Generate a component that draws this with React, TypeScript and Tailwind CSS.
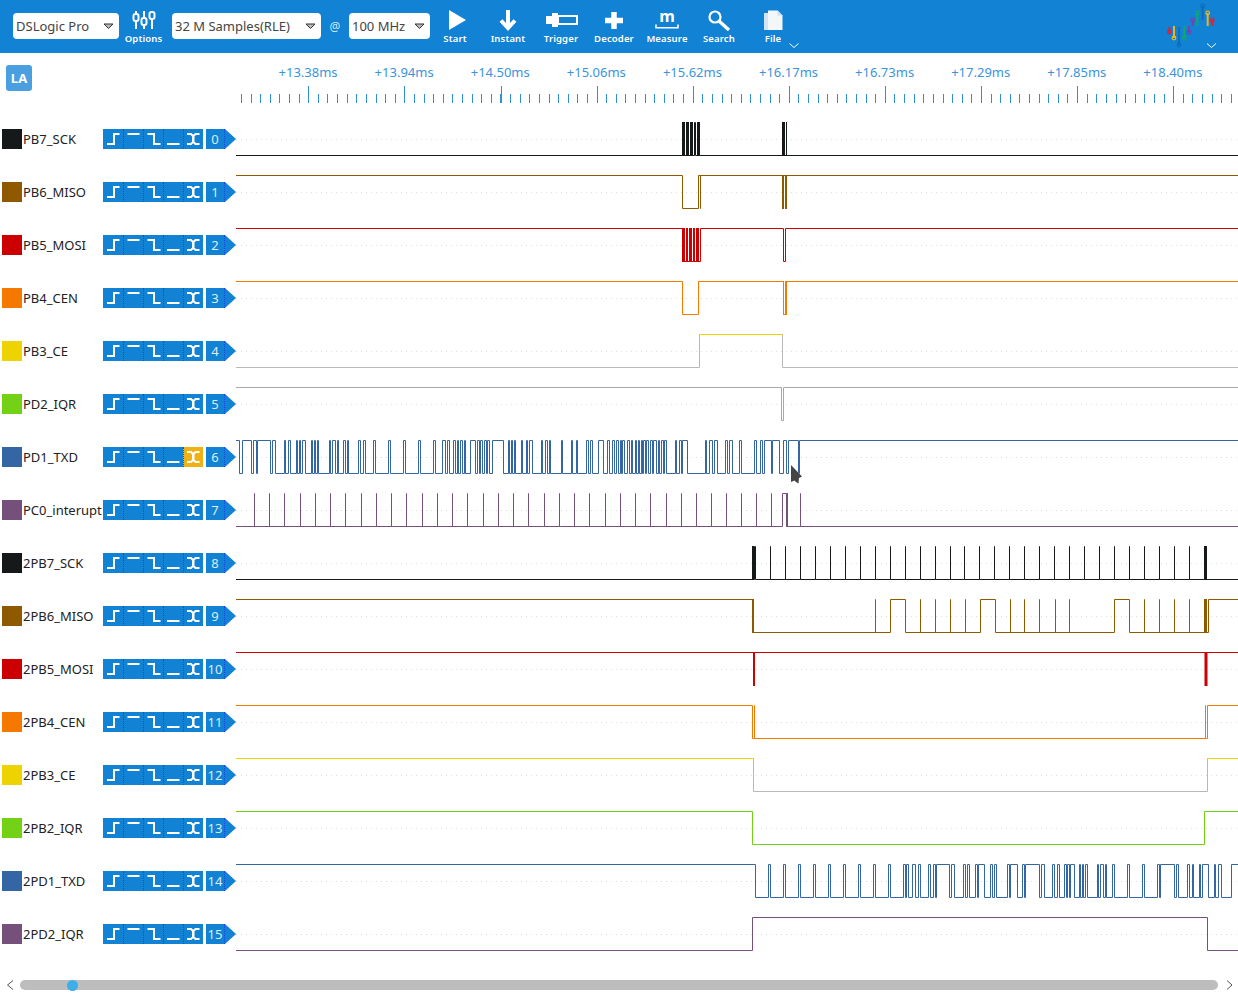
import React from "react";

type Iv = [number, number];
const z = (o: number, l: number[][]): Iv[] => l.map(([a, b]) => [o + a / 3, o + b / 3] as Iv);
const END = 1300;

const txd: Iv[] = [
  ...z(236, [[-30, 10], [20, 46], [52, 60], [65, 104], [110, 118], [144, 149], [157, 163], [181, 185], [189, 193], [199, 208], [226, 230], [235, 239], [244, 248], [280, 284], [289, 298], [303, 307], [322, 327], [334, 338], [367, 373], [382, 388], [412, 418], [457, 463], [502, 508], [547, 553], [592, 598], [619, 628], [634, 640], [652, 658], [664, 668], [673, 678], [684, 689], [703, 718], [724, 729], [734, 739], [745, 750], [754, 760], [769, 802], [817, 821], [826, 830], [835, 838]]),
  ...z(516, [[15, 20], [30, 35], [40, 48], [75, 80], [88, 93], [100, 104], [135, 140], [165, 170], [180, 185], [210, 216], [222, 228], [248, 262], [275, 280], [290, 294], [300, 306], [312, 316], [320, 325], [335, 340], [345, 350], [358, 362], [366, 371], [375, 379], [383, 388], [392, 396], [402, 408], [412, 420], [426, 430], [436, 442], [445, 450]]),
  ...z(670, [[16, 20], [28, 33], [38, 52], [105, 109], [118, 126], [133, 142], [165, 172], [178, 186], [208, 215], [252, 260], [270, 276], [282, 303], [308, 328], [340, 350], [355, 385]]),
  [799.5, END],
];

const txd2: Iv[] = [
  [200, 755],
  ...z(745, [[70, 75], [115, 120], [160, 165], [205, 210], [250, 255], [295, 300], [340, 345], [385, 390], [430, 435], [475, 480], [484, 489], [502, 512], [520, 525], [550, 557], [564, 570], [573, 612], [618, 628], [655, 662], [667, 673], [690, 696], [700, 718], [736, 742]]),
  ...z(990, [[12, 20], [52, 58], [60, 82], [97, 102], [106, 148], [153, 163], [187, 193], [202, 208], [223, 229], [233, 237], [241, 254], [268, 272], [276, 280], [285, 292], [322, 326], [330, 341], [345, 350], [367, 373], [412, 418], [457, 463], [502, 507], [512, 552], [558, 565], [592, 598], [606, 610], [627, 632], [637, 655], [672, 677], [686, 695], [725, 800]]),
];

const interrupt: Iv[] = [
  ...Array.from({ length: 35 }, (_, k) => {
    const x = k <= 28 ? 254.3 + 15.25 * k : 681.3 + 15 * (k - 28);
    return [x, x] as Iv;
  }),
  [782.3, 786.5],
  [800.3, 800.3],
];

const sckSpikes = [770, 785, 800, 815, 830, 845, 860, 875, 890, 905, 920, 935, 950, 964, 979, 994, 1009, 1024, 1039, 1054, 1069, 1084, 1099, 1114, 1129, 1144, 1159, 1174, 1189];

type Row = {
  name: string;
  color: string;
  line?: string;
  high: Iv[];
  blocks?: Iv[];
  blockColor?: string;
  topColor?: string;
  active?: boolean;
};

const rows: Row[] = [
  { name: "PB7_SCK", color: "#16191a", high: [[694.5, 695.5]], blocks: [[682, 685], [686, 689], [690, 693], [697, 700], [782, 785], [786, 787]] },
  { name: "PB6_MISO", color: "#8f5902", high: [[200, 682], [698, 700], [700.9, 782], [783, 785], [786.5, END]], blocks: [[782, 784], [785, 787]] },
  { name: "PB5_MOSI", color: "#cc0000", high: [[200, 682], [700, 783], [785, END]], blocks: [[682, 685], [686, 688], [689, 692], [693, 695], [696, 699]] },
  { name: "PB4_CEN", color: "#f57900", high: [[200, 682], [698, 783], [786, END]], blocks: [[783, 784], [785, 787]] },
  { name: "PB3_CE", color: "#edd400", line: "#b8b8b8", topColor: "#edd400", high: [[699, 782.5]] },
  { name: "PD2_IQR", color: "#73d216", line: "#a8a8a8", high: [[200, 781.9], [783.8, END]] },
  { name: "PD1_TXD", color: "#3465a4", high: txd, active: true },
  { name: "PC0_interupt", color: "#75507b", high: interrupt, blocks: [[786.5, 788]] },
  { name: "2PB7_SCK", color: "#16191a", high: [[754, 755], ...sckSpikes.map((x) => [x, x] as Iv)], blocks: [[752, 754], [1204, 1207]] },
  { name: "2PB6_MISO", color: "#8f5902", high: [[200, 753], [875, 875], [890, 905], [920, 920], [935, 935], [950, 950], [965, 965], [980, 995], [1010, 1010], [1024, 1024], [1039, 1039], [1055, 1055], [1069, 1069], [1114, 1129], [1144, 1144], [1159, 1159], [1174, 1174], [1189, 1189], [1208, END]], blocks: [[752, 754], [1204, 1207]] },
  { name: "2PB5_MOSI", color: "#cc0000", high: [[200, END]], blocks: [[753, 755], [1204.5, 1207.5]] },
  { name: "2PB4_CEN", color: "#f57900", high: [[200, 752], [754, 754], [1205, 1205], [1207, END]] },
  { name: "2PB3_CE", color: "#edd400", line: "#b8b8b8", topColor: "#edd400", high: [[200, 753], [1207, END]] },
  { name: "2PB2_IQR", color: "#73d216", high: [[200, 752], [1204.5, END]] },
  { name: "2PD1_TXD", color: "#3465a4", high: txd2 },
  { name: "2PD2_IQR", color: "#75507b", high: [[752, 1207]] },
];

const ORIGIN = 236;
const sx = (x: number) => Math.floor(x - ORIGIN) + 0.5;
const TOP = 9.5;
const BOT = 42.5;

function wavePath(high: Iv[]) {
  const list = [...high].sort((a, b) => a[0] - b[0]);
  let d = "";
  let cur = 0.5;
  let level = BOT;
  if (list.length && list[0][0] <= ORIGIN) {
    level = TOP;
  }
  d = `M0 ${level}`;
  for (const [a, b] of list) {
    if (a > ORIGIN) {
      cur = sx(a);
      d += `L${cur} ${BOT}L${cur} ${TOP}`;
    }
    if (b < 1240) {
      cur = sx(b);
      d += `L${cur} ${TOP}L${cur} ${BOT}`;
      level = BOT;
    } else {
      level = TOP;
    }
  }
  d += `L1002 ${level}`;
  return d;
}

function topPath(high: Iv[]) {
  return high.map(([a, b]) => `M${a <= ORIGIN ? 0 : sx(a)} ${TOP}L${b >= 1240 ? 1002 : sx(b)} ${TOP}`).join("");
}

function Wave({ row }: { row: Row }) {
  return (
    <svg width="1002" height="53" className="block shrink-0">
      <line x1="0" x2="1002" y1="26.5" y2="26.5" stroke="#dedede" strokeDasharray="1 4" />
      <path d={wavePath(row.high)} fill="none" stroke={row.line ?? row.color} strokeWidth="1" />
      {row.topColor && <path d={topPath(row.high)} fill="none" stroke={row.topColor} />}
      {row.blocks?.map(([a, b], i) => (
        <rect key={i} x={a - ORIGIN} y="9" width={b - a} height="34" fill={row.color} />
      ))}
    </svg>
  );
}

function TriggerGlyph({ kind }: { kind: number }) {
  const p = [
    "M4 15h7V5h5.5",
    "M3.5 5h12",
    "M3.5 5h6.5v10h6.5",
    "M3 15h12.5",
    "M3 5h4l2 2v6l-2 2H3M15.5 5h-4l-2 2v6l2 2h4",
  ][kind];
  return (
    <svg width="20" height="20" className="block">
      <path d={p} fill="none" stroke="white" strokeWidth="2" />
    </svg>
  );
}

function TriggerGroup({ active }: { active?: boolean }) {
  return (
    <div className="flex h-5 w-[100px] shrink-0 bg-[#1182d4]">
      {[0, 1, 2, 3, 4].map((k) => (
        <div
          key={k}
          className={
            k === 4
              ? `h-5 w-5 border-l border-dotted border-[#1a44e8] ${active ? "bg-[#f0b114]" : ""}`
              : k === 0
                ? "h-5 w-5"
                : "h-5 w-5 border-l border-dotted border-[#1a44e8]"
          }
        >
          <TriggerGlyph kind={k} />
        </div>
      ))}
    </div>
  );
}

function IndexTag({ n }: { n: number }) {
  return (
    <div className="ml-[3px] flex h-5 w-[30px] shrink-0 items-center bg-[#1182d4] [clip-path:polygon(0_0,19px_0,30px_50%,19px_100%,0_100%)]">
      <span className="w-[19px] border-r border-dotted border-[#1a44e8] text-center text-[13px] leading-5 text-[#dcecf9]">{n}</span>
    </div>
  );
}

function ChannelRow({ row, index }: { row: Row; index: number }) {
  return (
    <div className="flex h-[53px]">
      <div className="flex w-[236px] shrink-0 pl-[2px] pt-4">
        <div className="h-5 w-5 shrink-0" style={{ backgroundColor: row.color }} />
        <div className="ml-px w-[80px] shrink-0 whitespace-nowrap text-[13px] leading-5 text-[#222]">{row.name}</div>
        <TriggerGroup active={row.active} />
        <IndexTag n={index} />
      </div>
      <Wave row={row} />
    </div>
  );
}

function Select({ label, className }: { label: string; className: string }) {
  return (
    <div className={`flex h-[26px] shrink-0 items-center justify-between rounded-[4px] bg-white pl-[3px] pr-[5px] pt-px text-[13px] text-[#444] ${className}`}>
      <span className="whitespace-nowrap">{label}</span>
      <svg width="11" height="7" className="block">
        <path d="M1 1h9L5.5 5.5z" fill="#bbb" stroke="#333" strokeWidth="1" />
      </svg>
    </div>
  );
}

function ToolButton({ label, width, children }: { label: string; width: string; children: React.ReactNode }) {
  return (
    <div className={`flex shrink-0 flex-col items-center pt-2 ${width}`}>
      <div className="flex h-6 items-center justify-center">{children}</div>
      <span className="whitespace-nowrap text-[9.5px] font-semibold leading-[13px] tracking-[0.15px] text-white">{label}</span>
    </div>
  );
}

function Logo() {
  const sticks: [number, number, number, number, string][] = [
    [69.3, 27, 33, 32, "#e5202e"],
    [74, 26, 38, 38, "#efb31c"],
    [79, 27, 45, 45, "#0f6cbd"],
    [84.3, 26, 38, 38, "#0fa968"],
    [89, 26, 32, 32, "#7a3fb0"],
    [92.7, 20, 26, 20, "#7a3fb0"],
    [97.3, 13, 26, 13, "#0fa968"],
    [102.7, 6, 20, 6, "#0f6cbd"],
    [107.7, 13, 26, 13, "#efb31c"],
    [112.3, 20, 26, 20, "#e5202e"],
  ];
  return (
    <svg width="138" height="53" className="block shrink-0">
      {sticks.map(([x, y1, y2, c, col], i) => (
        <g key={i} stroke={col} fill="none">
          <line x1={x} x2={x} y1={y1} y2={y2} strokeWidth="2" />
          <circle cx={x} cy={c} r="1.8" strokeWidth="1.2" />
        </g>
      ))}
      <path d="M107 43.5l4.5 4 4.5-4" fill="none" stroke="white" strokeWidth="1" />
    </svg>
  );
}

function Toolbar() {
  return (
    <div className="flex h-[53px] shrink-0 bg-[#1182d4] pl-[13px]">
      <div className="flex h-[52px] items-center">
        <Select label="DSLogic Pro" className="w-[106px]" />
      </div>
      <ToolButton label="Options" width="w-[49px]">
        <svg width="26" height="22" className="block">
          <g fill="none" stroke="white" strokeWidth="2">
            <path d="M5 2v3M5 12v8M13 2v7M13 16v4M21 2v1M21 10v10" />
            <rect x="2.5" y="5" width="5" height="7" rx="2" />
            <rect x="10.5" y="9" width="5" height="7" rx="2" />
            <rect x="18.5" y="3" width="5" height="7" rx="2" />
          </g>
        </svg>
      </ToolButton>
      <div className="ml-1 flex h-[52px] items-center">
        <Select label="32 M Samples(RLE)" className="w-[149px]" />
        <span className="w-7 pt-px text-center text-[12px] text-[#cfe6f7]">@</span>
        <Select label="100 MHz" className="w-[81px]" />
      </div>
      <ToolButton label="Start" width="w-[50px]">
        <svg width="24" height="22" className="block">
          <path d="M6 1v20L23 11z" fill="white" />
        </svg>
      </ToolButton>
      <ToolButton label="Instant" width="w-[56px]">
        <svg width="18" height="21" className="block">
          <path d="M9 0v18M2 10.5l7 7.5 7-7.5" fill="none" stroke="white" strokeWidth="4" />
        </svg>
      </ToolButton>
      <ToolButton label="Trigger" width="w-[50px]">
        <svg width="34" height="14" className="block">
          <rect x="2" y="3" width="7" height="8" fill="white" />
          <rect x="8" y="0" width="6" height="14" fill="white" />
          <rect x="14" y="3" width="19" height="8" fill="none" stroke="white" strokeWidth="2" />
        </svg>
      </ToolButton>
      <ToolButton label="Decoder" width="w-[56px]">
        <svg width="18" height="17" className="block">
          <path d="M9 0v17M0 8.5h18" stroke="white" strokeWidth="5.5" />
        </svg>
      </ToolButton>
      <ToolButton label="Measure" width="w-[50px]">
        <div className="flex h-[22px] w-[26px] flex-col items-center">
          <span className="h-[15px] text-[16px] font-bold leading-[15px] text-white">m</span>
          <svg width="26" height="7" className="block">
            <path d="M2 0.5v3.2h22v-3.2" fill="none" stroke="white" strokeWidth="1.6" />
          </svg>
        </div>
      </ToolButton>
      <ToolButton label="Search" width="w-[54px]">
        <svg width="24" height="22" className="block">
          <circle cx="8" cy="8" r="5.5" fill="none" stroke="white" strokeWidth="2.2" />
          <path d="M12 12l10 9" stroke="white" strokeWidth="3.4" />
        </svg>
      </ToolButton>
      <div className="relative">
        <ToolButton label="File" width="w-[54px]">
          <svg width="20" height="21" className="block">
            <path d="M1 3h10v17H1z" fill="#d3e5f5" />
            <path d="M5 0.5h9.5l5 5v14.5H5z" fill="#f4f7fa" />
            <path d="M14.5 0.5v5h5z" fill="#cfe0f0" />
          </svg>
        </ToolButton>
        <svg width="12" height="8" className="absolute left-[42px] top-[42px] block">
          <path d="M1.5 1.5l4.5 4 4.5-4" fill="none" stroke="white" strokeWidth="1" />
        </svg>
      </div>
      <div className="ml-auto">
        <Logo />
      </div>
    </div>
  );
}

const labels = ["+13.38ms", "+13.94ms", "+14.50ms", "+15.06ms", "+15.62ms", "+16.17ms", "+16.73ms", "+17.29ms", "+17.85ms", "+18.40ms"];

function Ruler() {
  const small: number[] = [];
  for (let x = 241; x < 1238; x += 9.61) small.push(Math.round(x));
  const major = Array.from({ length: 10 }, (_, i) => Math.round(308.3 + 96.1 * i));
  return (
    <div className="flex h-[60px] shrink-0">
      <div className="w-[236px] shrink-0 pl-[6px] pt-3">
        <div className="flex h-[26px] w-[26px] items-center justify-center rounded-[3px] bg-[#4a9fe0] pt-px text-[13px] font-bold text-white">LA</div>
      </div>
      <div className="flex w-[1002px] flex-col">
        <div className="ml-6 flex h-[33px] items-end pb-1">
          {labels.map((l) => (
            <span key={l} className="w-[96.1px] shrink-0 text-center text-[13px] leading-[20px] text-[#3a94dc]">{l}</span>
          ))}
        </div>
        <svg width="1002" height="27" className="block">
          {small.map((x) => (
            <line key={x} x1={x - 235.5} x2={x - 235.5} y1="8" y2="17" stroke="#2f8fd8" strokeWidth="1" />
          ))}
          {major.map((x) => (
            <line key={x} x1={x - 235.5} x2={x - 235.5} y1="0" y2="17" stroke="#2f8fd8" strokeWidth="1" />
          ))}
        </svg>
      </div>
    </div>
  );
}

function ScrollBar() {
  return (
    <div className="mt-[19px] flex h-[10px] items-center">
      <svg width="20" height="12" className="block shrink-0">
        <path d="M13 1.5L7.5 6l5.5 4.5" fill="none" stroke="#555" strokeWidth="1" />
      </svg>
      <div className="flex h-[10px] w-[1198px] shrink-0 items-center rounded-[5px] bg-[#bdbdbd]">
        <div className="ml-[47px] h-[11px] w-[11px] rounded-full bg-[#3daee9]" />
      </div>
      <svg width="20" height="12" className="block shrink-0">
        <path d="M9 1.5L14 6l-5 4.5" fill="none" stroke="#555" strokeWidth="1" />
      </svg>
    </div>
  );
}

export default function App() {
  return (
    <div className="relative flex h-[995px] w-[1238px] flex-col overflow-hidden bg-white font-['Noto_Sans',sans-serif]">
      <Toolbar />
      <Ruler />
      {rows.map((r, i) => (
        <ChannelRow key={r.name} row={r} index={i} />
      ))}
      <ScrollBar />
      <svg width="20" height="26" className="absolute left-[788px] top-[463px] block">
        <path d="M3 2L14 13.5L11 15L10.5 20.5L8 19L6.5 17.5L3 19z" fill="white" opacity="0.6" transform="translate(1.5 1.5)" />
        <path d="M3 2L14 13.5L11 15L10.5 20.5L8 19L6.5 17.5L3 19z" fill="#454545" />
      </svg>
    </div>
  );
}
